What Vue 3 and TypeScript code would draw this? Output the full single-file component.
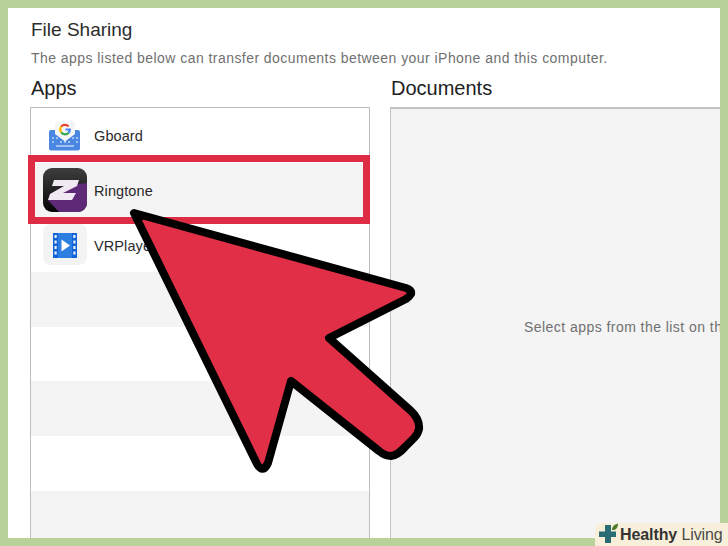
<script setup lang="ts">
interface AppRow {
  name: string
  kind: 'gboard' | 'ringtone' | 'vr' | 'empty'
}

const rows: AppRow[] = [
  { name: 'Gboard', kind: 'gboard' },
  { name: 'Ringtone', kind: 'ringtone' },
  { name: 'VRPlayer', kind: 'vr' },
  { name: '', kind: 'empty' },
  { name: '', kind: 'empty' },
  { name: '', kind: 'empty' },
  { name: '', kind: 'empty' },
  { name: '', kind: 'empty' }
]

const sprockets = [12, 17.5, 23, 28.5]
</script>

<template>
  <div class="page">
    <main class="panel">
      <h1 class="title">File Sharing</h1>
      <p class="subtitle">The apps listed below can transfer documents between your iPhone and this computer.</p>

      <div class="columns">
        <section class="appsCol">
          <h2 class="heading">Apps</h2>
          <ul class="list">
            <li v-for="(row, i) in rows" :key="i" class="row" :class="{ shaded: i % 2 === 1 }">
              <template v-if="row.kind !== 'empty'">
                <svg class="icon" width="44" height="44" viewBox="0 0 44 44">
                  <g v-if="row.kind === 'gboard'">
                    <rect x="6" y="17" width="31" height="20.500" rx="2" fill="#4a87e2" />
                    <g fill="#9fc2f0">
                      <rect x="9" y="24" width="2" height="2" />
                      <rect x="13" y="24" width="2" height="2" />
                      <rect x="17" y="28" width="2" height="2" />
                      <rect x="21" y="28" width="2" height="2" />
                      <rect x="25" y="28" width="2" height="2" />
                      <rect x="29" y="24" width="2" height="2" />
                      <rect x="33" y="24" width="2" height="2" />
                      <rect x="9" y="28" width="2" height="2" />
                      <rect x="33" y="28" width="2" height="2" />
                      <rect x="13" y="32" width="18" height="2" />
                    </g>
                    <path d="M12 10.500a2 2 0 0 1 2-2h16a2 2 0 0 1 2 2V21l-10 7.500L12 21z" fill="#f5f5f5" />
                    <g fill="none" stroke-width="2.200">
                      <path d="M25.500 13.500A4.800 4.800 0 0 0 18.200 13.600" stroke="#ea4335" />
                      <path d="M18.200 13.600A4.800 4.800 0 0 0 18.200 19.400" stroke="#fbbc05" />
                      <path d="M18.200 19.400A4.800 4.800 0 0 0 25.600 19.700" stroke="#34a853" />
                      <path d="M25.600 19.700A4.800 4.800 0 0 0 26.800 16.500H22.500" stroke="#4285f4" />
                    </g>
                  </g>
                  <g v-else-if="row.kind === 'ringtone'">
                    <defs>
                      <linearGradient id="ringBg" x1="0" y1="0" x2="0" y2="1">
                        <stop offset="0" stop-color="#3e3e3e" />
                        <stop offset="0.6" stop-color="#1c1c1c" />
                        <stop offset="1" stop-color="#050505" />
                      </linearGradient>
                    </defs>
                    <rect width="44" height="44" rx="9" fill="url(#ringBg)" />
                    <path d="M22 18L44 15V35a9 9 0 0 1-9 9H16L5 32z" fill="#5e2a78" />
                    <path d="M11 12H36L34 18L20 25H33L29 32H5L7 26L21 18H9z" fill="#f0e9f2" />
                  </g>
                  <g v-else>
                    <rect y="1" width="44" height="41" rx="8" fill="#f3f3f3" />
                    <rect x="10" y="10" width="24" height="25" fill="#1263d8" />
                    <rect x="15" y="10" width="14" height="25" fill="#2c7fe0" />
                    <g fill="#eef3fb">
                      <rect v-for="y in sprockets" :key="y" x="11.500" :y="y" width="2.200" height="3" />
                      <rect v-for="y in sprockets" :key="y" x="30.300" :y="y" width="2.200" height="3" />
                    </g>
                    <path d="M18.500 16.500L27 22.500L18.500 28.500z" fill="#fff" />
                  </g>
                </svg>
                <span class="name">{{ row.name }}</span>
              </template>
            </li>
          </ul>
        </section>

        <section class="docsCol">
          <h2 class="heading">Documents</h2>
          <div class="docsBox">
            <span class="hint">Select apps from the list on the left to see documents</span>
          </div>
        </section>
      </div>
    </main>

    <div class="redBox"></div>

    <svg class="arrow" width="728" height="546" viewBox="0 0 728 546">
      <path
        d="M134 213L406 288Q412 290 411 294Q410 296 406 299L329 338L410 410Q420 419 419 429Q418 434 414 438L405 447Q398 455 391 456Q385 456 379 451L291 381L268 463Q263 474 257 464Z"
        fill="#e02f46"
        stroke="#000"
        stroke-width="8"
        stroke-linejoin="round"
      />
    </svg>

    <div class="badge">
      <svg class="badgeIcon" width="21" height="23" viewBox="0 0 21 23">
        <path d="M14 7C14 3.500 16.500 1.500 20 0.500C20 4 18.500 7.500 14 7z" fill="#4d7a2c" />
        <path d="M7 2h6v6.500h5V14h-5v6H7v-6H1V8.500h6z" fill="#2a6c74" />
      </svg>
      <span class="brand"><b>Healthy</b> Living</span>
    </div>
  </div>
</template>

<style>
html,
body {
  margin: 0;
  background: #b9d29c;
}
</style>

<style scoped>
.page {
  position: relative;
  width: 728px;
  height: 546px;
  box-sizing: border-box;
  padding: 8px;
  overflow: hidden;
  background: #b9d29c;
  font-family: "Liberation Sans", Arial, sans-serif;
}

.panel {
  height: 530px;
  box-sizing: border-box;
  padding: 11px 0 0 23px;
  overflow: hidden;
  background: #fff;
}

.title {
  margin: 0;
  font-size: 19px;
  line-height: 21px;
  font-weight: 400;
  color: #2c2c2c;
}

.subtitle {
  margin: 10px 0 0;
  font-size: 14px;
  line-height: 16px;
  letter-spacing: 0.45px;
  white-space: nowrap;
  color: #707070;
}

.columns {
  display: flex;
  gap: 20px;
  margin-top: 10px;
  margin-left: -1px;
  width: 800px;
}

.heading {
  margin: 0 0 7px 1px;
  font-size: 20px;
  line-height: 24px;
  font-weight: 400;
  color: #222;
}

.appsCol {
  width: 340px;
  flex: none;
}

.list {
  margin: 0;
  padding: 0;
  list-style: none;
  border: 1px solid #bdbdbd;
  border-bottom: 0;
}

.row {
  display: flex;
  align-items: center;
  gap: 7px;
  height: 54.7px;
  padding-left: 12px;
}

.shaded {
  background: #f4f4f4;
}

.icon {
  flex: none;
}

.name {
  margin-top: 2px;
  font-size: 14.5px;
  letter-spacing: 0.1px;
  color: #2a2a2a;
}

.docsCol {
  flex: 1;
}

.docsBox {
  display: flex;
  align-items: center;
  height: 436px;
  padding-left: 133px;
  border: 1px solid #c2c2c2;
  border-width: 2px 0 0 1px;
  background: #f4f4f4;
}

.hint {
  font-size: 14px;
  letter-spacing: 0.45px;
  white-space: nowrap;
  color: #707070;
}

.redBox {
  position: absolute;
  left: 28px;
  top: 155px;
  width: 342px;
  height: 69px;
  box-sizing: border-box;
  border: 7px solid #dd2c44;
}

.arrow {
  position: absolute;
  left: 0;
  top: 0;
}

.badge {
  position: absolute;
  right: 0;
  bottom: 0;
  display: flex;
  align-items: center;
  gap: 0;
  width: 133px;
  height: 23px;
  box-sizing: border-box;
  padding-left: 3px;
  border-top-left-radius: 8px;
  background: #f7efd9;
}

.badgeIcon {
  flex: none;
}

.brand {
  margin-left: 1px;
  font-size: 16px;
  letter-spacing: -0.1px;
  white-space: nowrap;
  color: #4a4a48;
}

.brand b {
  color: #333;
}
</style>
